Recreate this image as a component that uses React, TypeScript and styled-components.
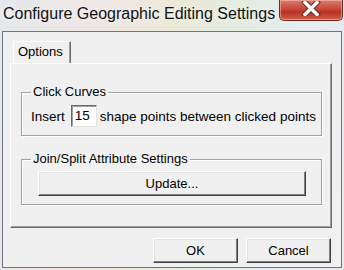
import styled, { createGlobalStyle } from "styled-components";

const GlobalStyle = createGlobalStyle`
  html, body {
    margin: 0;
    padding: 0;
    background: #e8ecef;
  }
  * {
    box-sizing: border-box;
  }
`;

const Window = styled.div`
  width: 344px;
  height: 270px;
  display: flex;
  flex-direction: column;
  padding: 0 2px 2px 2px;
  background: linear-gradient(
    100deg,
    #e4e8ec 0%,
    #efe6e4 25%,
    #ece9d8 45%,
    #e2ecdf 60%,
    #e6ecf2 80%,
    #eae6ee 100%
  );
  font-family: "Liberation Sans", Arial, sans-serif;
  overflow: hidden;
`;

const TitleBar = styled.div`
  height: 31px;
  display: flex;
  align-items: flex-start;
  flex-shrink: 0;
`;

const Title = styled.div`
  font-family: "Liberation Sans", Arial, sans-serif;
  font-size: 16px;
  line-height: 20px;
  margin-top: 4px;
  margin-left: 1px;
  color: #111;
  white-space: nowrap;
  text-shadow: 0 0 6px rgba(255, 255, 255, 0.9);
`;

const CloseButton = styled.div`
  margin-left: auto;
  margin-right: -1px;
  width: 64px;
  height: 21px;
  border: 1px solid #6e2a22;
  border-top: none;
  border-radius: 0 0 5px 5px;
  background: linear-gradient(180deg, #d9806e 0%, #c7463a 45%, #b93224 60%, #d0604a 100%);
  box-shadow: inset 0 0 0 1px rgba(255, 200, 190, 0.5);
  display: flex;
  align-items: flex-start;
  justify-content: center;
  padding-top: 1px;
`;

const Client = styled.div`
  flex: 1;
  background: #f0f0f0;
  border: 1px solid #6d7680;
  display: flex;
  flex-direction: column;
  padding: 9px 10px 0 0;
`;

const TabStrip = styled.div`
  display: flex;
  padding-left: 10px;
`;

const Tab = styled.div`
  width: 58px;
  height: 22px;
  border-left: 1px solid #ffffff;
  border-top: 1px solid #ffffff;
  border-right: 1px solid #696969;
  box-shadow: inset -1px 0 #a0a0a0;
  font-size: 13px;
  line-height: 20px;
  padding-left: 4px;
  color: #000;
`;

const Panel = styled.div`
  margin-left: 7px;
  width: 322px;
  height: 165px;
  border-top: 1px solid #ffffff;
  border-left: 1px solid #ffffff;
  border-right: 1px solid #696969;
  border-bottom: 1px solid #696969;
  box-shadow: inset -1px -1px #a0a0a0;
  padding: 20px 0 0 10px;
  display: flex;
  flex-direction: column;
`;

const Group = styled.fieldset<{ $gap?: number }>`
  width: 301px;
  margin: ${(p) => p.$gap ?? 0}px 0 0 0;
  padding: 0 0 8px 0;
  border: 1px solid #a0a0a0;
  box-shadow: inset 1px 1px #ffffff, 1px 1px #ffffff;
  min-width: 0;
`;

const Legend = styled.legend`
  margin-left: 9px;
  padding: 0 2px;
  font-size: 13px;
  line-height: 16px;
  color: #000;
`;

const Row = styled.div`
  display: flex;
  align-items: center;
  padding: 5px 0 0 9px;
  font-size: 13.5px;
  color: #000;
  white-space: nowrap;
`;

const Field = styled.div`
  width: 26px;
  height: 22px;
  margin: 0 3px 0 6px;
  background: #ffffff;
  border-top: 1px solid #696969;
  border-left: 1px solid #696969;
  border-right: 1px solid #e3e3e3;
  border-bottom: 1px solid #e3e3e3;
  box-shadow: inset 1px 1px #a0a0a0;
  font-size: 13.5px;
  line-height: 20px;
  padding-left: 3px;
`;

const PushButton = styled.div<{ $w: number }>`
  width: ${(p) => p.$w}px;
  height: 25px;
  background: #f0f0f0;
  border-top: 1px solid #ffffff;
  border-left: 1px solid #ffffff;
  border-right: 1px solid #404040;
  border-bottom: 1px solid #404040;
  box-shadow: inset -1px -1px #808080, inset 1px 1px #e3e3e3;
  display: flex;
  align-items: center;
  justify-content: center;
  font-size: 13px;
  color: #000;
`;

const ButtonSlot = styled.div`
  padding: 4px 0 0 16px;
`;

const Footer = styled.div`
  display: flex;
  justify-content: flex-end;
  gap: 8px;
  margin-top: 10px;
`;

export default function App() {
  return (
    <>
      <GlobalStyle />
      <Window>
        <TitleBar>
          <Title>Configure Geographic Editing Settings</Title>
          <CloseButton>
            <svg width="20" height="15" viewBox="0 0 20 15">
              <path
                d="M4 1.5 L16 13.5 M16 1.5 L4 13.5"
                stroke="#6a2a22"
                strokeWidth="5.5"
                strokeLinecap="square"
              />
              <path
                d="M4 1.5 L16 13.5 M16 1.5 L4 13.5"
                stroke="#ffffff"
                strokeWidth="3.5"
                strokeLinecap="square"
              />
            </svg>
          </CloseButton>
        </TitleBar>
        <Client>
          <TabStrip>
            <Tab>Options</Tab>
          </TabStrip>
          <Panel>
            <Group>
              <Legend>Click Curves</Legend>
              <Row>
                Insert
                <Field>15</Field>
                shape points between clicked points
              </Row>
            </Group>
            <Group $gap={15}>
              <Legend>Join/Split Attribute Settings</Legend>
              <ButtonSlot>
                <PushButton $w={268}>Update...</PushButton>
              </ButtonSlot>
            </Group>
          </Panel>
          <Footer>
            <PushButton $w={85}>OK</PushButton>
            <PushButton $w={85}>Cancel</PushButton>
          </Footer>
        </Client>
      </Window>
    </>
  );
}
